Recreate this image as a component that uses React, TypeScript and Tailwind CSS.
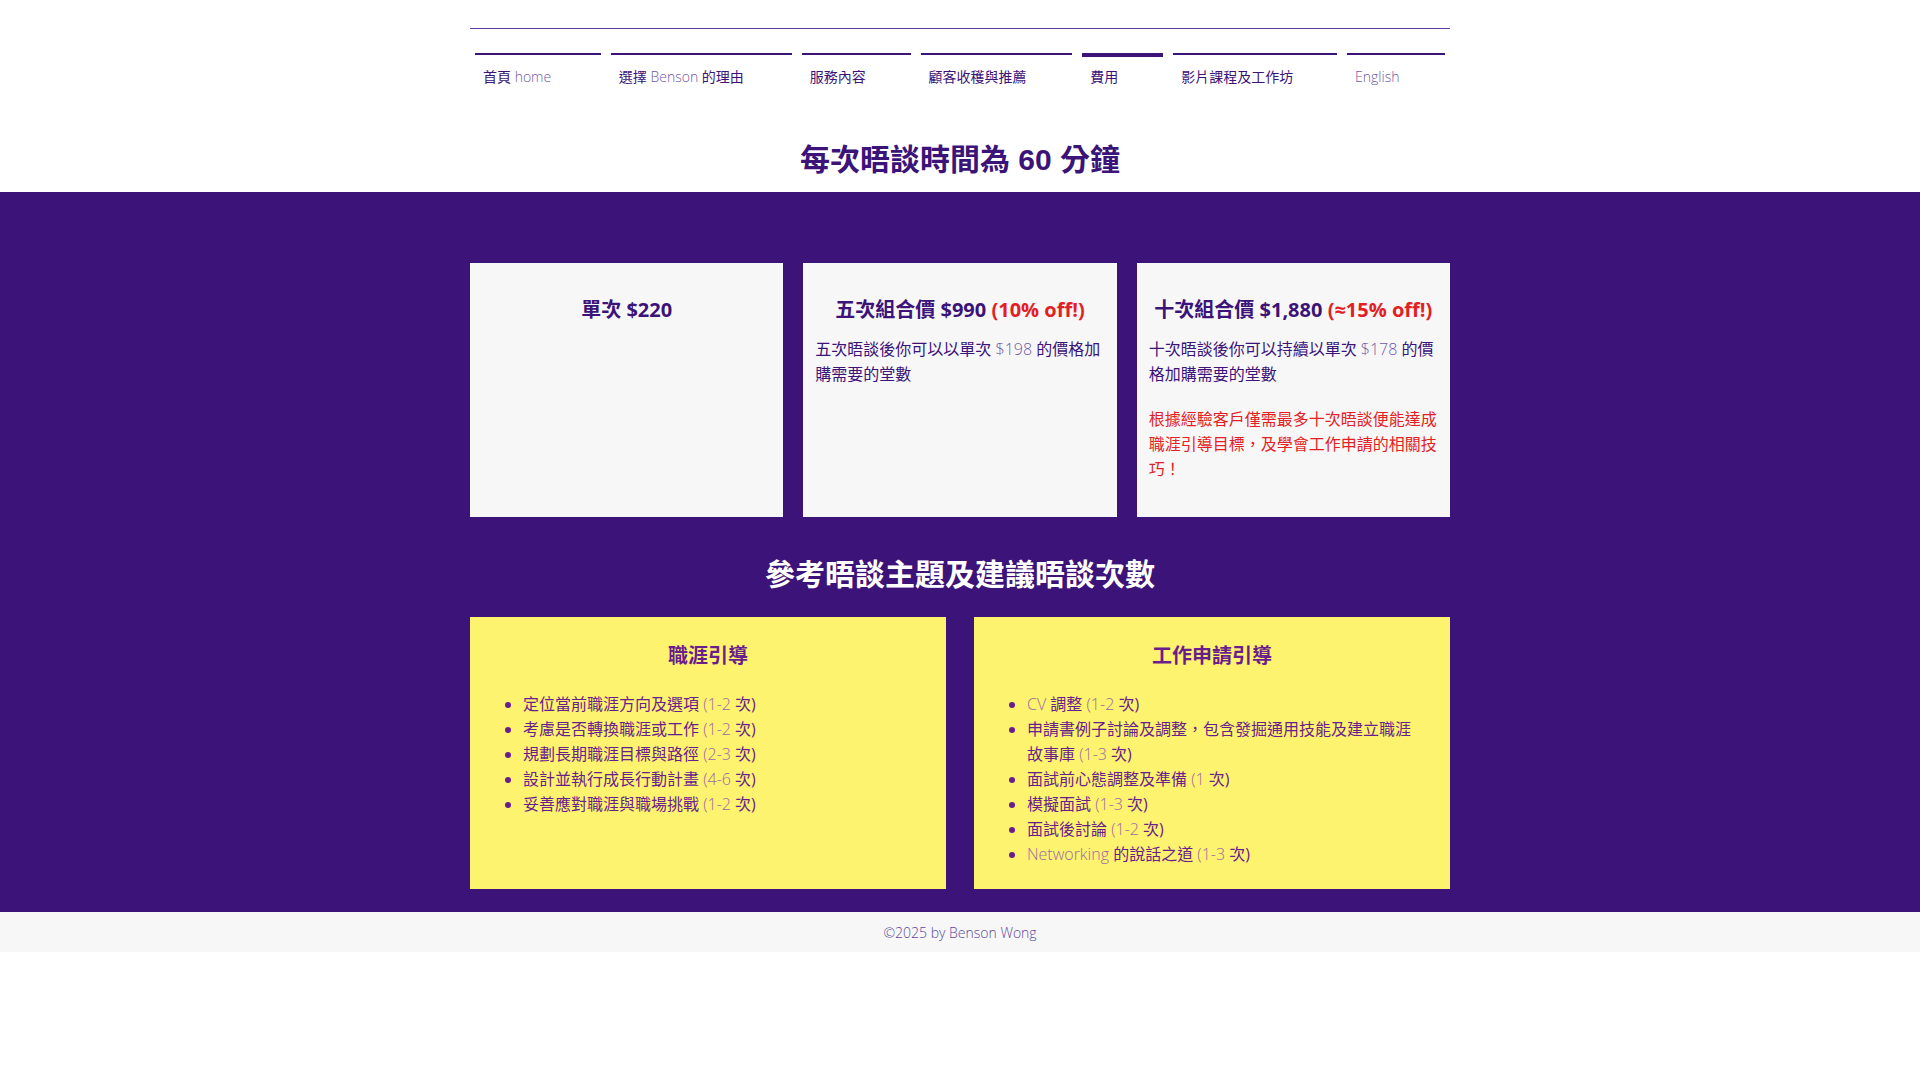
import React from 'react';

const Lat: React.FC<{ children: React.ReactNode; className?: string }> = ({ children, className = 'text-[#6f58a8]' }) => (
  <span className={`font-light ${className}`}>{children}</span>
);

const App: React.FC = () => {
  const tabs = [
    { w: 'w-[126px]', label: <>首頁 <Lat>home</Lat></> },
    { w: 'w-[181px]', label: <>選擇 <Lat>Benson</Lat> 的理由</> },
    { w: 'w-[109px]', label: <>服務內容</> },
    { w: 'w-[152px]', label: <>顧客收穫與推薦</> },
    { w: 'w-[81px]', label: <>費用</>, active: true },
    { w: 'w-[164px]', label: <>影片課程及工作坊</> },
    { w: 'w-[98px]', label: <Lat>English</Lat> },
  ];

  const careerItems = [
    ['定位當前職涯方向及選項 ', '(1-2 ', '次)'],
    ['考慮是否轉換職涯或工作 ', '(1-2 ', '次)'],
    ['規劃長期職涯目標與路徑 ', '(2-3 ', '次)'],
    ['設計並執行成長行動計畫 ', '(4-6 ', '次)'],
    ['妥善應對職涯與職場挑戰 ', '(1-2 ', '次)'],
  ];

  const yl = 'text-[#9a6aa8]';

  return (
    <div className="min-h-screen bg-white font-['Open_Sans','Noto_Sans_CJK_TC',sans-serif] text-[#3b1379]">
      <header className="w-[980px] mx-auto pt-[28px]">
        <div className="border-t border-[#5b3c9c]" />
        <nav className="flex gap-[10px] px-[5px] mt-[24px]">
          {tabs.map((t, i) => (
            <div
              key={i}
              className={`${t.w} ${t.active ? 'border-t-4 pt-[10px]' : 'border-t-2 pt-[12px]'} border-[#3b1379] pl-[8px] text-[14px] leading-[20px] whitespace-nowrap`}
            >
              {t.label}
            </div>
          ))}
        </nav>
        <h1 className="mt-[53px] mb-[12px] h-[40px] leading-[40px] text-center text-[30px] font-bold font-['Liberation_Sans','Noto_Sans_CJK_TC',sans-serif] text-[#3b1379]">
          每次晤談時間為 60 分鐘
        </h1>
      </header>

      <section className="bg-[#3b1379] pt-[71px] pb-[23px]">
        <div className="w-[980px] mx-auto">
          <div className="grid grid-cols-3 gap-[20px]">
            <div className="h-[254px] bg-[#f7f7f7] px-[12px] pt-[33px]">
              <h3 className="text-center text-[20px] leading-[28px] font-bold">單次 $220</h3>
            </div>
            <div className="h-[254px] bg-[#f7f7f7] px-[12px] pt-[33px]">
              <h3 className="text-center text-[20px] leading-[28px] font-bold whitespace-nowrap">
                五次組合價 $990 <span className="text-[#e31e24]">(10% off!)</span>
              </h3>
              <p className="mt-[13px] text-[16px] leading-[25px]">
                五次晤談後你可以以單次 <Lat>$198</Lat> 的價格加購需要的堂數
              </p>
            </div>
            <div className="h-[254px] bg-[#f7f7f7] px-[12px] pt-[33px]">
              <h3 className="text-center text-[20px] leading-[28px] font-bold whitespace-nowrap">
                十次組合價 $1,880 <span className="text-[#e31e24]">(≈15% off!)</span>
              </h3>
              <p className="mt-[13px] text-[16px] leading-[25px]">
                十次晤談後你可以持續以單次 <Lat>$178</Lat> 的價格加購需要的堂數
              </p>
              <p className="mt-[20px] text-[16px] leading-[25px] text-[#e31e24]">
                根據經驗客戶僅需最多十次晤談便能達成職涯引導目標，及學會工作申請的相關技巧！
              </p>
            </div>
          </div>

          <h2 className="mt-[38px] h-[40px] leading-[40px] text-center text-[30px] font-bold text-white font-['Liberation_Sans','Noto_Sans_CJK_TC',sans-serif]">
            參考晤談主題及建議晤談次數
          </h2>

          <div className="mt-[22px] grid grid-cols-2 gap-[28px]">
            <div className="bg-[#fef36e] px-[30px] pt-[25px] pb-[22px] text-[#6a1e8c]">
              <h3 className="text-center text-[20px] leading-[28px] font-bold">職涯引導</h3>
              <ul className="mt-[22px] list-disc pl-[23px] text-[16px] leading-[25px] marker:text-[#6a1e8c]">
                {careerItems.map((it, i) => (
                  <li key={i}>
                    {it[0]}
                    <Lat className={yl}>{it[1]}</Lat>
                    {it[2]}
                  </li>
                ))}
              </ul>
            </div>
            <div className="bg-[#fef36e] px-[30px] pt-[25px] pb-[22px] text-[#6a1e8c]">
              <h3 className="text-center text-[20px] leading-[28px] font-bold">工作申請引導</h3>
              <ul className="mt-[22px] list-disc pl-[23px] text-[16px] leading-[25px] marker:text-[#6a1e8c]">
                <li>
                  <Lat className={yl}>CV</Lat> 調整 <Lat className={yl}>(1-2</Lat> 次)
                </li>
                <li>
                  申請書例子討論及調整，包含發掘通用技能及建立職涯故事庫 <Lat className={yl}>(1-3</Lat> 次)
                </li>
                <li>
                  面試前心態調整及準備 <Lat className={yl}>(1</Lat> 次)
                </li>
                <li>
                  模擬面試 <Lat className={yl}>(1-3</Lat> 次)
                </li>
                <li>
                  面試後討論 <Lat className={yl}>(1-2</Lat> 次)
                </li>
                <li>
                  <Lat className={yl}>Networking</Lat> 的說話之道 <Lat className={yl}>(1-3</Lat> 次)
                </li>
              </ul>
            </div>
          </div>
        </div>
      </section>

      <footer className="h-[40px] bg-[#f7f7f7] flex items-center justify-center text-[14px] font-light text-[#5b4a9c]">
        ©2025 by Benson Wong
      </footer>
    </div>
  );
};

export default App;
